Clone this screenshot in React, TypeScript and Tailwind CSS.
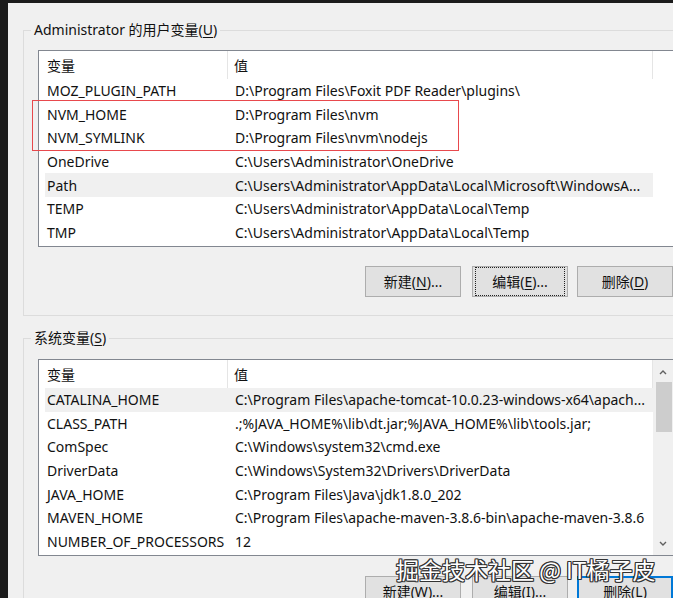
import type { ReactNode } from "react";

type Row = { name: string; value: string; selected?: boolean };

const USER_VARS: Row[] = [
  { name: "MOZ_PLUGIN_PATH", value: "D:\\Program Files\\Foxit PDF Reader\\plugins\\" },
  { name: "NVM_HOME", value: "D:\\Program Files\\nvm" },
  { name: "NVM_SYMLINK", value: "D:\\Program Files\\nvm\\nodejs" },
  { name: "OneDrive", value: "C:\\Users\\Administrator\\OneDrive" },
  {
    name: "Path",
    value: "C:\\Users\\Administrator\\AppData\\Local\\Microsoft\\WindowsA...",
    selected: true,
  },
  { name: "TEMP", value: "C:\\Users\\Administrator\\AppData\\Local\\Temp" },
  { name: "TMP", value: "C:\\Users\\Administrator\\AppData\\Local\\Temp" },
];

const SYSTEM_VARS: Row[] = [
  {
    name: "CATALINA_HOME",
    value: "C:\\Program Files\\apache-tomcat-10.0.23-windows-x64\\apach...",
    selected: true,
  },
  { name: "CLASS_PATH", value: ".;%JAVA_HOME%\\lib\\dt.jar;%JAVA_HOME%\\lib\\tools.jar;" },
  { name: "ComSpec", value: "C:\\Windows\\system32\\cmd.exe" },
  { name: "DriverData", value: "C:\\Windows\\System32\\Drivers\\DriverData" },
  { name: "JAVA_HOME", value: "C:\\Program Files\\Java\\jdk1.8.0_202" },
  { name: "MAVEN_HOME", value: "C:\\Program Files\\apache-maven-3.8.6-bin\\apache-maven-3.8.6" },
  { name: "NUMBER_OF_PROCESSORS", value: "12" },
];

function Key({ k }: { k: string }) {
  return <span className="underline underline-offset-2">{k}</span>;
}

function VarList({
  rows,
  scrollbar,
  highlight,
}: {
  rows: Row[];
  scrollbar?: boolean;
  highlight?: [number, number];
}) {
  return (
    <div className="relative ml-[14px] flex h-[197px] w-[700px] border border-[#828790] bg-white">
      <div className="w-[614px] shrink-0">
        <div className="flex h-[28px] items-center">
          <div className="flex h-full w-[189px] items-center border-r border-[#e5e5e5] pl-[8px]">变量</div>
          <div className="flex h-full w-[425px] items-center border-r border-[#e5e5e5] pl-[6px]">值</div>
        </div>
        <div className="pl-[6px]">
          {rows.map((r) => (
            <div
              key={r.name}
              className={`flex h-[23.6px] items-center ${r.selected ? "bg-[#f0f0f0]" : ""}`}
            >
              <div className="w-[183px] shrink-0 whitespace-nowrap pl-[2px]">{r.name}</div>
              <div className="whitespace-nowrap pl-[7px]">{r.value}</div>
            </div>
          ))}
        </div>
      </div>
      {scrollbar && (
        <div className="flex w-[20px] shrink-0 flex-col items-center bg-[#f0f0f0]">
          <svg width="10" height="20" viewBox="0 0 10 20" className="mt-[2px]">
            <path d="M2 12 L5 9 L8 12" fill="none" stroke="#606060" strokeWidth="1.4" />
          </svg>
          <div className="ml-[1px] h-[50px] w-[16px] bg-[#cdcdcd]" />
          <div className="flex-1" />
          <svg width="10" height="20" viewBox="0 0 10 20" className="mb-[1px]">
            <path d="M2 8 L5 11 L8 8" fill="none" stroke="#606060" strokeWidth="1.4" />
          </svg>
        </div>
      )}
      {highlight && (
        <div
          className="pointer-events-none absolute left-[-7px] w-[427px] border border-[#e8494d]"
          style={{ top: highlight[0], height: highlight[1] }}
        />
      )}
    </div>
  );
}

function Btn({
  children,
  focused,
  isDefault,
  className = "",
}: {
  children: ReactNode;
  focused?: boolean;
  isDefault?: boolean;
  className?: string;
}) {
  return (
    <div
      className={`flex h-[31px] w-[96px] shrink-0 items-center justify-center border bg-[#e1e1e1] ${
        isDefault ? "border-2 border-[#0078d7]" : "border-[#adadad]"
      } ${className}`}
    >
      <div
        className={`flex h-full w-full items-center justify-center ${
          focused ? "m-[2px] border border-dotted border-[#202020]" : ""
        }`}
      >
        {children}
      </div>
    </div>
  );
}

function Group({ label, children }: { label: ReactNode; children: ReactNode }) {
  return (
    <fieldset className="w-[700px] border border-[#dcdcdc]">
      <legend className="ml-[7px] px-[3px] leading-[20px]">{label}</legend>
      {children}
    </fieldset>
  );
}

export default function App() {
  return (
    <div
      className="relative h-[598px] w-[673px] overflow-hidden border-l-[8px] border-t-[3px] border-[#1b1b1b] bg-[#f0f0f0] text-[14px] text-[#111]"
      style={{ fontFamily: '"Noto Sans", "Noto Sans CJK SC", sans-serif' }}
    >
      <div className="pl-[15px] pt-[17px]">
        <Group
          label={
            <>
              Administrator 的用户变量(<Key k="U" />)
            </>
          }
        >
          <div className="pt-[10px]">
            <VarList rows={USER_VARS} highlight={[49, 51]} />
          </div>
          <div className="flex h-[68px] items-center pl-[341px]">
            <Btn>
              新建(<Key k="N" />)...
            </Btn>
            <Btn focused className="ml-[11px]">
              编辑(<Key k="E" />)...
            </Btn>
            <Btn className="ml-[9px]">
              删除(<Key k="D" />)
            </Btn>
          </div>
        </Group>

        <div className="mt-[12px]">
          <Group
            label={
              <>
                系统变量(<Key k="S" />)
              </>
            }
          >
            <div className="pt-[11px]">
              <VarList rows={SYSTEM_VARS} scrollbar />
            </div>
            <div className="flex h-[68px] items-start pl-[341px] pt-[20px]">
              <Btn>
                新建(<Key k="W" />)...
              </Btn>
              <Btn className="ml-[11px]">
                编辑(<Key k="I" />)...
              </Btn>
              <Btn isDefault className="ml-[9px]">
                删除(<Key k="L" />)
              </Btn>
            </div>
          </Group>
        </div>
      </div>

      <div
        className="pointer-events-none absolute left-[388px] top-[551px] whitespace-nowrap text-[23px] leading-[30px] text-white"
        style={{
          fontFamily: '"Noto Sans CJK SC", sans-serif',
          textShadow:
            "1px 0 0 #333, -1px 0 0 #333, 0 1px 0 #333, 0 -1px 0 #333, 1px 1px 0 #333, -1px -1px 0 #333, 1px -1px 0 #333, -1px 1px 0 #333",
        }}
      >
        掘金技术社区 @ IT橘子皮
      </div>
    </div>
  );
}
